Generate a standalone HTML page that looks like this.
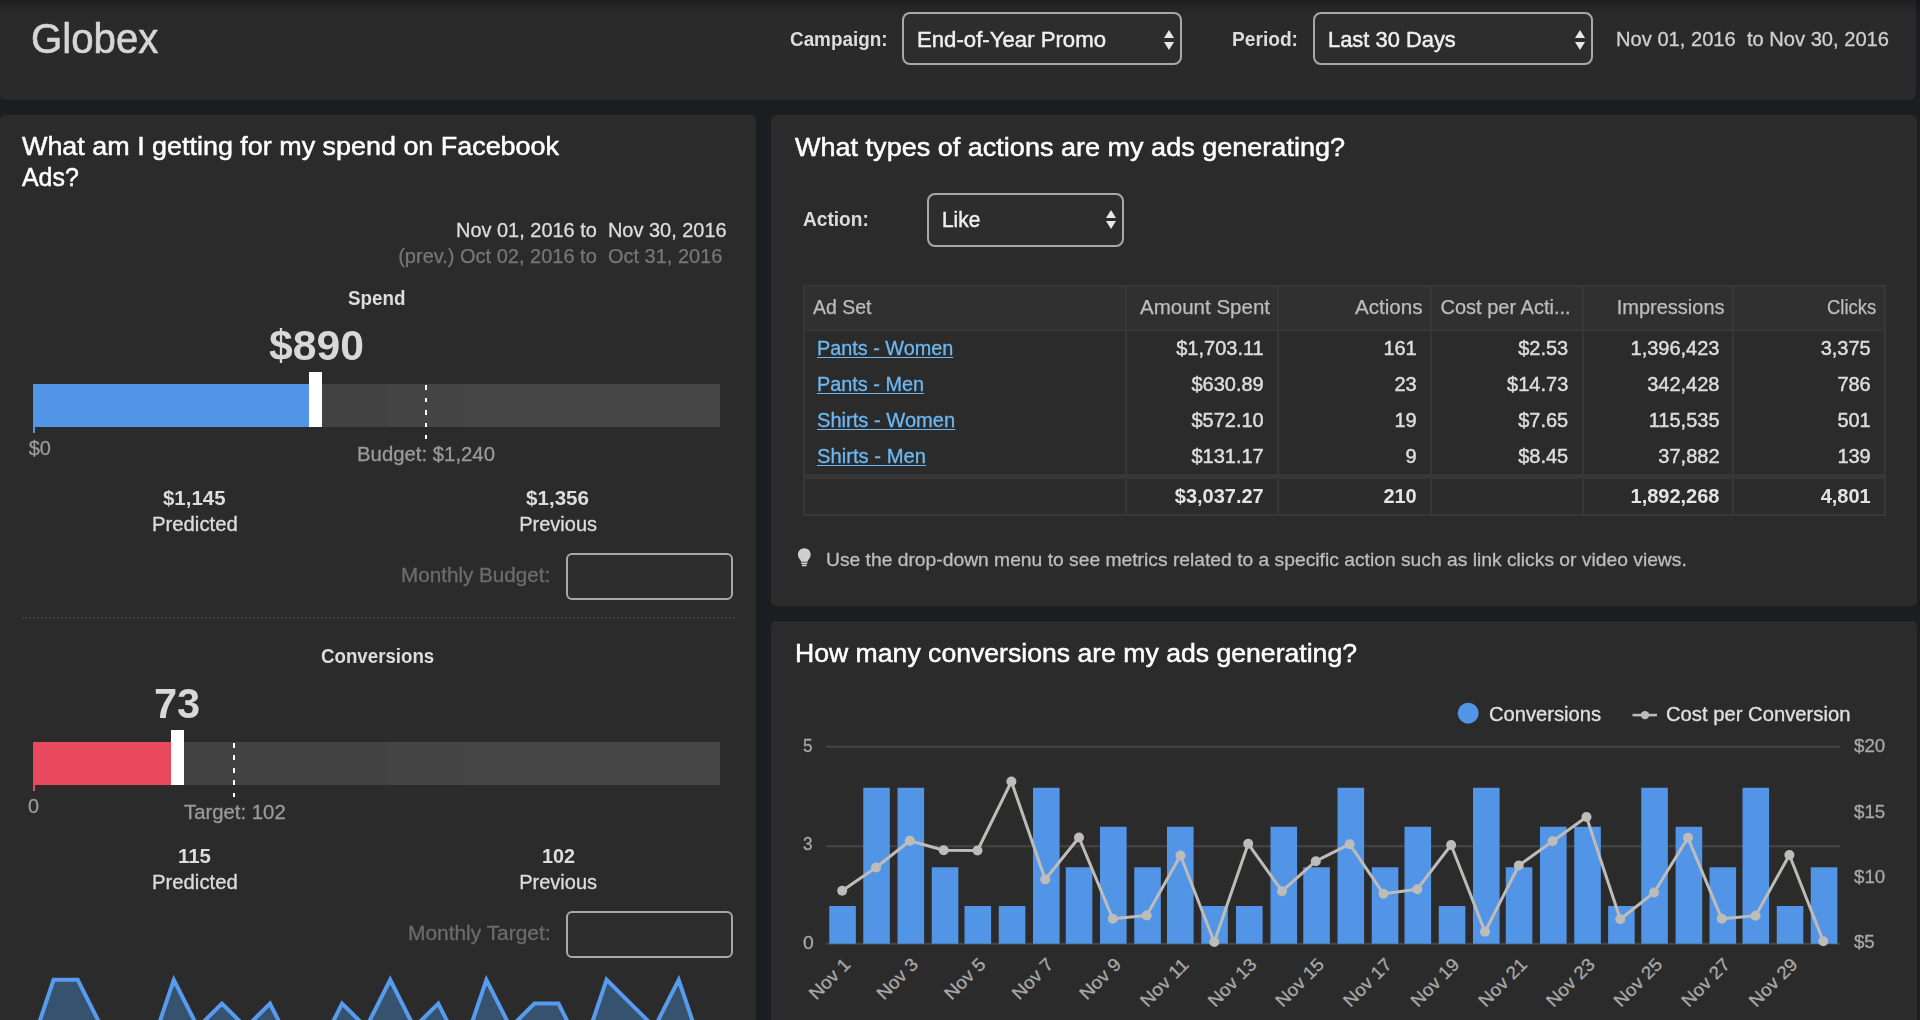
<!DOCTYPE html>
<html lang="en">
<head>
<meta charset="utf-8">
<title>Globex - Facebook Ads Dashboard</title>
<style>
html,body{margin:0;padding:0;overflow:hidden;}
body{width:1920px;height:1020px;overflow:hidden;background:#1c1d21;font-family:"Liberation Sans",sans-serif;position:relative;}
.abs,.t{position:absolute;}
.t{white-space:nowrap;transform-origin:0 0;}
.panel{position:absolute;background:#2b2b2b;border-radius:5px;}
.sel{position:absolute;box-sizing:border-box;border:2px solid #a8a8a8;border-radius:8px;background:#2d2d2d;}
.inp{position:absolute;box-sizing:border-box;border:2px solid #a8a8a8;border-radius:6px;background:#2d2d2d;}
.arr{position:absolute;width:0;height:0;border-left:5.4px solid transparent;border-right:5.4px solid transparent;}
.arr.up{border-bottom:8px solid #e8e8e8;}
.arr.dn{border-top:8px solid #e8e8e8;}
.vl,.hl{position:absolute;background:#373737;}
a.t{color:#6db8f2;text-decoration:none;}
</style>
</head>
<body>
<div id="clip" style="position:relative;width:1920px;height:1020px;overflow:hidden;">
<div id="stage" style="position:absolute;left:-20px;top:-20px;width:1960px;height:1060px;background:#1c1d21;filter:blur(0.55px);">
<div id="inner" style="position:absolute;left:20px;top:20px;width:1920px;height:1020px;">
<!-- header -->
<div class="abs" id="hdr" style="left:0;top:0;width:1916px;height:100px;background:#2a2a2a;border-radius:0 0 7px 5px;"></div>
<div class="abs" style="left:0;top:0;width:1920px;height:20px;background:linear-gradient(to bottom,rgba(0,0,0,.30) 0,rgba(0,0,0,.13) 7px,rgba(0,0,0,.04) 14px,rgba(0,0,0,0) 20px);"></div>
<div class="sel" style="left:902px;top:12px;width:280px;height:53px;"></div>
<div class="arr up" style="left:1163.5px;top:29.5px;"></div><div class="arr dn" style="left:1163.5px;top:41.5px;"></div>
<div class="sel" style="left:1313px;top:12px;width:280px;height:53px;"></div>
<div class="arr up" style="left:1574.5px;top:29.5px;"></div><div class="arr dn" style="left:1574.5px;top:41.5px;"></div>

<!-- panels -->
<div class="panel" style="left:0px;top:114.5px;width:756px;height:920px;"></div>
<div class="panel" style="left:771px;top:114.5px;width:1145.5px;height:491px;"></div>
<div class="panel" style="left:771px;top:621px;width:1145.5px;height:420px;"></div>

<!-- LEFT PANEL GRAPHICS -->
<div class="abs" style="left:32.5px;top:384.2px;width:687.5px;height:42.8px;background:#464646;"></div>
<div class="abs" style="left:32.5px;top:384.2px;width:355.5px;height:42.8px;background:#424242;"></div>
<div class="abs" style="left:388px;top:384.2px;width:76px;height:42.8px;background:#444444;"></div>
<div class="abs" style="left:32.5px;top:384.2px;width:277.0px;height:42.8px;background:#5294e6;"></div>
<div class="abs" style="left:32.5px;top:384.2px;width:2.5px;height:48.8px;background:#5294e6;"></div>
<div class="abs" style="left:309.25px;top:372.09999999999997px;width:12.75px;height:54.9px;background:#ffffff;"></div>
<div class="abs" style="left:425.25px;top:385.0px;width:2px;height:54.3px;background:repeating-linear-gradient(#ffffff 0,#ffffff 4.5px,transparent 4.5px,transparent 12.5px);"></div>
<div class="abs" style="left:32.5px;top:742.2px;width:687.5px;height:42.8px;background:#464646;"></div>
<div class="abs" style="left:32.5px;top:742.2px;width:355.5px;height:42.8px;background:#424242;"></div>
<div class="abs" style="left:388px;top:742.2px;width:76px;height:42.8px;background:#444444;"></div>
<div class="abs" style="left:32.5px;top:742.2px;width:139.0px;height:42.8px;background:#e8495d;"></div>
<div class="abs" style="left:32.5px;top:742.2px;width:2.5px;height:48.8px;background:#e8495d;"></div>
<div class="abs" style="left:171.25px;top:730.1px;width:13.0px;height:54.9px;background:#ffffff;"></div>
<div class="abs" style="left:233.25px;top:743.0px;width:2px;height:54.3px;background:repeating-linear-gradient(#ffffff 0,#ffffff 4.5px,transparent 4.5px,transparent 12.5px);"></div>
<div class="inp" style="left:565.5px;top:553px;width:167px;height:46.5px;"></div>
<div class="inp" style="left:565.5px;top:911px;width:167px;height:46.5px;"></div>
<div class="abs" style="left:22px;top:616.5px;width:713px;height:0;border-top:2px dotted #3c3c3c;"></div>
<svg class="abs" style="left:0;top:960px;" width="756" height="60" viewBox="0 960 756 60"><path d="M29.6,1051.2 L53.6,979.8 L77.7,979.8 L101.7,1027.4 L125.8,1051.2 L149.8,1051.2 L173.8,979.8 L197.9,1027.4 L221.9,1003.6 L246.0,1027.4 L270.0,1003.6 L294.0,1051.2 L318.1,1051.2 L342.1,1003.6 L366.2,1027.4 L390.2,979.8 L414.2,1027.4 L438.3,1003.6 L462.3,1051.2 L486.4,979.8 L510.4,1027.4 L534.4,1003.6 L558.5,1003.6 L582.5,1051.2 L606.6,979.8 L630.6,1003.6 L654.6,1027.4 L678.7,979.8 L702.7,1051.2 L726.8,1027.4 L726.8,1100 L29.6,1100 Z" fill="#37526f"/><path d="M29.6,1051.2 L53.6,979.8 L77.7,979.8 L101.7,1027.4 L125.8,1051.2 L149.8,1051.2 L173.8,979.8 L197.9,1027.4 L221.9,1003.6 L246.0,1027.4 L270.0,1003.6 L294.0,1051.2 L318.1,1051.2 L342.1,1003.6 L366.2,1027.4 L390.2,979.8 L414.2,1027.4 L438.3,1003.6 L462.3,1051.2 L486.4,979.8 L510.4,1027.4 L534.4,1003.6 L558.5,1003.6 L582.5,1051.2 L606.6,979.8 L630.6,1003.6 L654.6,1027.4 L678.7,979.8 L702.7,1051.2 L726.8,1027.4" fill="none" stroke="#579bee" stroke-width="4" stroke-linejoin="miter"/></svg>

<!-- RIGHT PANEL 1 -->
<div class="sel" style="left:927px;top:192.75px;width:197px;height:53.75px;background:#2d2d2d;"></div>
<div class="arr up" style="left:1105.6px;top:209.6px;"></div><div class="arr dn" style="left:1105.6px;top:221.4px;"></div>
<div class="abs" style="left:803px;top:285.5px;width:1083px;height:44px;background:#303030;"></div>
<div class="hl" style="left:803px;top:285px;width:1083px;height:2px;"></div>
<div class="hl" style="left:803px;top:328.5px;width:1083px;height:2px;"></div>
<div class="hl" style="left:803px;top:474px;width:1083px;height:4.5px;"></div>
<div class="hl" style="left:803px;top:513.5px;width:1083px;height:2px;"></div>
<div class="vl" style="left:803px;top:285px;width:2px;height:230.5px;"></div>
<div class="vl" style="left:1124.75px;top:285px;width:2px;height:230.5px;"></div>
<div class="vl" style="left:1277.25px;top:285px;width:2px;height:230.5px;"></div>
<div class="vl" style="left:1430.25px;top:285px;width:2px;height:230.5px;"></div>
<div class="vl" style="left:1581.5px;top:285px;width:2px;height:230.5px;"></div>
<div class="vl" style="left:1732.25px;top:285px;width:2px;height:230.5px;"></div>
<div class="vl" style="left:1884.25px;top:285px;width:2px;height:230.5px;"></div>
<svg class="abs" style="left:796.5px;top:548px;" width="14.6" height="19.5" viewBox="0 0 16 20" preserveAspectRatio="none"><path d="M8 0.3C4.1 0.3 1 3.2 1 6.8c0 2.3 1.3 3.7 2.3 5 .6.8 1 1.5 1 2.2h7.4c0-.7.4-1.4 1-2.2 1-1.3 2.3-2.7 2.3-5C15 3.2 11.9.3 8 .3z" fill="#cfcfcf"/><rect x="4.6" y="14.8" width="6.8" height="1.6" rx=".6" fill="#cfcfcf"/><rect x="5.2" y="17" width="5.6" height="1.8" rx=".9" fill="#cfcfcf"/></svg>

<!-- RIGHT PANEL 2: chart -->
<svg class="abs" style="left:771px;top:621px;" width="1146" height="399" viewBox="771 621 1146 399">
<rect x="826" y="745.75" width="1014" height="2" fill="#464646"/>
<rect x="826" y="845.25" width="1014" height="2" fill="#464646"/>
<rect x="826" y="942.75" width="1014" height="2" fill="#464646"/>
<rect x="829.25" y="906.00" width="26.6" height="37.75" fill="#5294e6"/>
<rect x="863.25" y="787.75" width="26.6" height="156.00" fill="#5294e6"/>
<rect x="897.50" y="787.75" width="26.6" height="156.00" fill="#5294e6"/>
<rect x="931.75" y="867.25" width="26.6" height="76.50" fill="#5294e6"/>
<rect x="964.50" y="906.00" width="26.6" height="37.75" fill="#5294e6"/>
<rect x="998.75" y="906.00" width="26.6" height="37.75" fill="#5294e6"/>
<rect x="1033.00" y="787.75" width="26.6" height="156.00" fill="#5294e6"/>
<rect x="1065.75" y="867.25" width="26.6" height="76.50" fill="#5294e6"/>
<rect x="1100.00" y="826.75" width="26.6" height="117.00" fill="#5294e6"/>
<rect x="1134.25" y="867.25" width="26.6" height="76.50" fill="#5294e6"/>
<rect x="1167.00" y="826.75" width="26.6" height="117.00" fill="#5294e6"/>
<rect x="1201.25" y="906.00" width="26.6" height="37.75" fill="#5294e6"/>
<rect x="1236.00" y="906.00" width="26.6" height="37.75" fill="#5294e6"/>
<rect x="1270.50" y="826.75" width="26.6" height="117.00" fill="#5294e6"/>
<rect x="1303.25" y="867.25" width="26.6" height="76.50" fill="#5294e6"/>
<rect x="1337.50" y="787.75" width="26.6" height="156.00" fill="#5294e6"/>
<rect x="1371.75" y="867.25" width="26.6" height="76.50" fill="#5294e6"/>
<rect x="1404.50" y="826.75" width="26.6" height="117.00" fill="#5294e6"/>
<rect x="1438.75" y="906.00" width="26.6" height="37.75" fill="#5294e6"/>
<rect x="1473.00" y="787.75" width="26.6" height="156.00" fill="#5294e6"/>
<rect x="1505.75" y="867.25" width="26.6" height="76.50" fill="#5294e6"/>
<rect x="1540.00" y="826.75" width="26.6" height="117.00" fill="#5294e6"/>
<rect x="1574.25" y="826.75" width="26.6" height="117.00" fill="#5294e6"/>
<rect x="1608.10" y="906.00" width="26.6" height="37.75" fill="#5294e6"/>
<rect x="1641.25" y="787.75" width="26.6" height="156.00" fill="#5294e6"/>
<rect x="1675.60" y="826.75" width="26.6" height="117.00" fill="#5294e6"/>
<rect x="1709.50" y="867.25" width="26.6" height="76.50" fill="#5294e6"/>
<rect x="1742.50" y="787.75" width="26.6" height="156.00" fill="#5294e6"/>
<rect x="1776.75" y="906.00" width="26.6" height="37.75" fill="#5294e6"/>
<rect x="1810.75" y="867.25" width="26.6" height="76.50" fill="#5294e6"/>
<path d="M842.2,890.8 L876.0,867.5 L909.9,840.8 L943.7,850.2 L977.5,850.5 L1011.4,781.5 L1045.2,879.5 L1079.0,837.5 L1112.8,918.8 L1146.7,915.5 L1180.5,855.5 L1214.3,942.0 L1248.2,843.8 L1282.0,891.2 L1315.8,861.2 L1349.7,844.2 L1383.5,893.8 L1417.3,889.2 L1451.1,845.0 L1485.0,931.8 L1518.8,865.5 L1552.6,841.2 L1586.5,817.0 L1620.3,919.2 L1654.1,892.5 L1688.0,837.8 L1721.8,918.8 L1755.6,915.8 L1789.4,855.0 L1823.3,941.2" fill="none" stroke="#bebcb8" stroke-width="3" stroke-linejoin="round"/>
<circle cx="842.2" cy="890.8" r="5" fill="#bebcb8"/>
<circle cx="876.0" cy="867.5" r="5" fill="#bebcb8"/>
<circle cx="909.9" cy="840.8" r="5" fill="#bebcb8"/>
<circle cx="943.7" cy="850.2" r="5" fill="#bebcb8"/>
<circle cx="977.5" cy="850.5" r="5" fill="#bebcb8"/>
<circle cx="1011.4" cy="781.5" r="5" fill="#bebcb8"/>
<circle cx="1045.2" cy="879.5" r="5" fill="#bebcb8"/>
<circle cx="1079.0" cy="837.5" r="5" fill="#bebcb8"/>
<circle cx="1112.8" cy="918.8" r="5" fill="#bebcb8"/>
<circle cx="1146.7" cy="915.5" r="5" fill="#bebcb8"/>
<circle cx="1180.5" cy="855.5" r="5" fill="#bebcb8"/>
<circle cx="1214.3" cy="942.0" r="5" fill="#bebcb8"/>
<circle cx="1248.2" cy="843.8" r="5" fill="#bebcb8"/>
<circle cx="1282.0" cy="891.2" r="5" fill="#bebcb8"/>
<circle cx="1315.8" cy="861.2" r="5" fill="#bebcb8"/>
<circle cx="1349.7" cy="844.2" r="5" fill="#bebcb8"/>
<circle cx="1383.5" cy="893.8" r="5" fill="#bebcb8"/>
<circle cx="1417.3" cy="889.2" r="5" fill="#bebcb8"/>
<circle cx="1451.1" cy="845.0" r="5" fill="#bebcb8"/>
<circle cx="1485.0" cy="931.8" r="5" fill="#bebcb8"/>
<circle cx="1518.8" cy="865.5" r="5" fill="#bebcb8"/>
<circle cx="1552.6" cy="841.2" r="5" fill="#bebcb8"/>
<circle cx="1586.5" cy="817.0" r="5" fill="#bebcb8"/>
<circle cx="1620.3" cy="919.2" r="5" fill="#bebcb8"/>
<circle cx="1654.1" cy="892.5" r="5" fill="#bebcb8"/>
<circle cx="1688.0" cy="837.8" r="5" fill="#bebcb8"/>
<circle cx="1721.8" cy="918.8" r="5" fill="#bebcb8"/>
<circle cx="1755.6" cy="915.8" r="5" fill="#bebcb8"/>
<circle cx="1789.4" cy="855.0" r="5" fill="#bebcb8"/>
<circle cx="1823.3" cy="941.2" r="5" fill="#bebcb8"/>
<circle cx="1468.2" cy="713.2" r="10.5" fill="#5294e6"/>
<rect x="1632.5" y="713.8" width="24.5" height="2.6" fill="#bebcb8"/><circle cx="1645" cy="715.1" r="4.2" fill="#bebcb8"/>
<text x="851.6" y="965.5" text-anchor="end" transform="rotate(-45 851.6 965.5)" font-size="18" fill="#a8a8a8" stroke="#a8a8a8" stroke-width="0.3" font-family="Liberation Sans, sans-serif" textLength="50" lengthAdjust="spacingAndGlyphs">Nov 1</text>
<text x="919.3" y="965.5" text-anchor="end" transform="rotate(-45 919.3 965.5)" font-size="18" fill="#a8a8a8" stroke="#a8a8a8" stroke-width="0.3" font-family="Liberation Sans, sans-serif" textLength="50" lengthAdjust="spacingAndGlyphs">Nov 3</text>
<text x="986.9" y="965.5" text-anchor="end" transform="rotate(-45 986.9 965.5)" font-size="18" fill="#a8a8a8" stroke="#a8a8a8" stroke-width="0.3" font-family="Liberation Sans, sans-serif" textLength="50" lengthAdjust="spacingAndGlyphs">Nov 5</text>
<text x="1054.6" y="965.5" text-anchor="end" transform="rotate(-45 1054.6 965.5)" font-size="18" fill="#a8a8a8" stroke="#a8a8a8" stroke-width="0.3" font-family="Liberation Sans, sans-serif" textLength="50" lengthAdjust="spacingAndGlyphs">Nov 7</text>
<text x="1122.2" y="965.5" text-anchor="end" transform="rotate(-45 1122.2 965.5)" font-size="18" fill="#a8a8a8" stroke="#a8a8a8" stroke-width="0.3" font-family="Liberation Sans, sans-serif" textLength="50" lengthAdjust="spacingAndGlyphs">Nov 9</text>
<text x="1189.9" y="965.5" text-anchor="end" transform="rotate(-45 1189.9 965.5)" font-size="18" fill="#a8a8a8" stroke="#a8a8a8" stroke-width="0.3" font-family="Liberation Sans, sans-serif" textLength="60" lengthAdjust="spacingAndGlyphs">Nov 11</text>
<text x="1257.6" y="965.5" text-anchor="end" transform="rotate(-45 1257.6 965.5)" font-size="18" fill="#a8a8a8" stroke="#a8a8a8" stroke-width="0.3" font-family="Liberation Sans, sans-serif" textLength="60" lengthAdjust="spacingAndGlyphs">Nov 13</text>
<text x="1325.2" y="965.5" text-anchor="end" transform="rotate(-45 1325.2 965.5)" font-size="18" fill="#a8a8a8" stroke="#a8a8a8" stroke-width="0.3" font-family="Liberation Sans, sans-serif" textLength="60" lengthAdjust="spacingAndGlyphs">Nov 15</text>
<text x="1392.9" y="965.5" text-anchor="end" transform="rotate(-45 1392.9 965.5)" font-size="18" fill="#a8a8a8" stroke="#a8a8a8" stroke-width="0.3" font-family="Liberation Sans, sans-serif" textLength="60" lengthAdjust="spacingAndGlyphs">Nov 17</text>
<text x="1460.5" y="965.5" text-anchor="end" transform="rotate(-45 1460.5 965.5)" font-size="18" fill="#a8a8a8" stroke="#a8a8a8" stroke-width="0.3" font-family="Liberation Sans, sans-serif" textLength="60" lengthAdjust="spacingAndGlyphs">Nov 19</text>
<text x="1528.2" y="965.5" text-anchor="end" transform="rotate(-45 1528.2 965.5)" font-size="18" fill="#a8a8a8" stroke="#a8a8a8" stroke-width="0.3" font-family="Liberation Sans, sans-serif" textLength="60" lengthAdjust="spacingAndGlyphs">Nov 21</text>
<text x="1595.9" y="965.5" text-anchor="end" transform="rotate(-45 1595.9 965.5)" font-size="18" fill="#a8a8a8" stroke="#a8a8a8" stroke-width="0.3" font-family="Liberation Sans, sans-serif" textLength="60" lengthAdjust="spacingAndGlyphs">Nov 23</text>
<text x="1663.5" y="965.5" text-anchor="end" transform="rotate(-45 1663.5 965.5)" font-size="18" fill="#a8a8a8" stroke="#a8a8a8" stroke-width="0.3" font-family="Liberation Sans, sans-serif" textLength="60" lengthAdjust="spacingAndGlyphs">Nov 25</text>
<text x="1731.2" y="965.5" text-anchor="end" transform="rotate(-45 1731.2 965.5)" font-size="18" fill="#a8a8a8" stroke="#a8a8a8" stroke-width="0.3" font-family="Liberation Sans, sans-serif" textLength="60" lengthAdjust="spacingAndGlyphs">Nov 27</text>
<text x="1798.8" y="965.5" text-anchor="end" transform="rotate(-45 1798.8 965.5)" font-size="18" fill="#a8a8a8" stroke="#a8a8a8" stroke-width="0.3" font-family="Liberation Sans, sans-serif" textLength="60" lengthAdjust="spacingAndGlyphs">Nov 29</text>
</svg>

<div id="txt" style="position:absolute;left:0;top:0;width:1920px;height:1020px;will-change:transform;">
<div class="t" style="top:17.30px;font-size:43px;line-height:43px;color:#d6d6d6;-webkit-text-stroke:0.6px #d6d6d6;left:31.40px;transform:scaleX(0.9350);">Globex</div>
<div class="t" style="top:28.02px;font-size:21px;line-height:21px;color:#dcdcdc;font-weight:700;left:790.00px;transform:scaleX(0.8985);">Campaign:</div>
<div class="t" style="top:29.15px;font-size:22.5px;line-height:22.5px;color:#f0f0f0;-webkit-text-stroke:0.45px #f0f0f0;left:917.00px;transform:scaleX(0.9855);">End-of-Year Promo</div>
<div class="t" style="top:28.02px;font-size:21px;line-height:21px;color:#dcdcdc;font-weight:700;left:1232.00px;transform:scaleX(0.9123);">Period:</div>
<div class="t" style="top:29.15px;font-size:22.5px;line-height:22.5px;color:#f0f0f0;-webkit-text-stroke:0.45px #f0f0f0;left:1328.20px;transform:scaleX(0.9731);">Last 30 Days</div>
<div class="t" style="top:29.07px;font-size:20px;line-height:20px;color:#d0d0d0;-webkit-text-stroke:0.3px #d0d0d0;left:1616.00px;transform:scaleX(1.0062);">Nov 01, 2016&nbsp; to Nov 30, 2016</div>
<div class="t" style="top:132.99px;font-size:26px;line-height:26px;color:#ffffff;-webkit-text-stroke:0.5px #ffffff;left:22.00px;transform:scaleX(1.0350);">What am I getting for my spend on Facebook</div>
<div class="t" style="top:163.99px;font-size:26px;line-height:26px;color:#ffffff;-webkit-text-stroke:0.5px #ffffff;left:22.00px;transform:scaleX(0.9576);">Ads?</div>
<div class="t" style="top:219.67px;font-size:20px;line-height:20px;color:#dddddd;-webkit-text-stroke:0.3px #dddddd;left:456.20px;transform:scaleX(0.9974);">Nov 01, 2016 to&nbsp; Nov 30, 2016</div>
<div class="t" style="top:246.07px;font-size:20px;line-height:20px;color:#777777;-webkit-text-stroke:0.25px #777777;left:398.20px;">(prev.) Oct 02, 2016 to&nbsp; Oct 31, 2016</div>
<div class="t" style="top:288.47px;font-size:20px;line-height:20px;color:#dddddd;font-weight:700;left:348.00px;transform:scaleX(0.9407);">Spend</div>
<div class="t" style="top:324.95px;font-size:42px;line-height:42px;color:#d8d8d8;font-weight:700;left:268.75px;transform:scaleX(1.0167);">$890</div>
<div class="t" style="top:438.07px;font-size:20px;line-height:20px;color:#9a9a9a;-webkit-text-stroke:0.3px #9a9a9a;left:28.75px;">$0</div>
<div class="t" style="top:444.07px;font-size:20px;line-height:20px;color:#9a9a9a;-webkit-text-stroke:0.3px #9a9a9a;left:357.00px;transform:scaleX(1.0170);">Budget: $1,240</div>
<div class="t" style="top:488.07px;font-size:20px;line-height:20px;color:#dddddd;font-weight:700;left:163.00px;transform:scaleX(1.0217);">$1,145</div>
<div class="t" style="top:514.37px;font-size:20px;line-height:20px;color:#dddddd;-webkit-text-stroke:0.3px #dddddd;left:151.75px;transform:scaleX(1.0148);">Predicted</div>
<div class="t" style="top:488.07px;font-size:20px;line-height:20px;color:#dddddd;font-weight:700;left:526.25px;transform:scaleX(1.0299);">$1,356</div>
<div class="t" style="top:514.37px;font-size:20px;line-height:20px;color:#dddddd;-webkit-text-stroke:0.3px #dddddd;left:519.25px;">Previous</div>
<div class="t" style="top:564.57px;font-size:20px;line-height:20px;color:#6c6c6c;-webkit-text-stroke:0.3px #6c6c6c;left:400.75px;transform:scaleX(1.0326);">Monthly Budget:</div>
<div class="t" style="top:646.47px;font-size:20px;line-height:20px;color:#dddddd;font-weight:700;left:320.50px;transform:scaleX(0.9347);">Conversions</div>
<div class="t" style="top:682.95px;font-size:42px;line-height:42px;color:#d8d8d8;font-weight:700;left:153.75px;transform:scaleX(0.9900);">73</div>
<div class="t" style="top:796.07px;font-size:20px;line-height:20px;color:#9a9a9a;-webkit-text-stroke:0.3px #9a9a9a;left:28.25px;transform:scaleX(0.9888);">0</div>
<div class="t" style="top:802.07px;font-size:20px;line-height:20px;color:#9a9a9a;-webkit-text-stroke:0.3px #9a9a9a;left:183.75px;transform:scaleX(1.0167);">Target: 102</div>
<div class="t" style="top:846.07px;font-size:20px;line-height:20px;color:#dddddd;font-weight:700;left:178.25px;transform:scaleX(1.0228);">115</div>
<div class="t" style="top:872.37px;font-size:20px;line-height:20px;color:#dddddd;-webkit-text-stroke:0.3px #dddddd;left:151.75px;transform:scaleX(1.0148);">Predicted</div>
<div class="t" style="top:846.07px;font-size:20px;line-height:20px;color:#dddddd;font-weight:700;left:541.50px;transform:scaleX(0.9888);">102</div>
<div class="t" style="top:872.37px;font-size:20px;line-height:20px;color:#dddddd;-webkit-text-stroke:0.3px #dddddd;left:519.25px;">Previous</div>
<div class="t" style="top:922.57px;font-size:20px;line-height:20px;color:#6c6c6c;-webkit-text-stroke:0.3px #6c6c6c;left:407.70px;transform:scaleX(1.0456);">Monthly Target:</div>
<div class="t" style="top:133.59px;font-size:26px;line-height:26px;color:#ffffff;-webkit-text-stroke:0.5px #ffffff;left:795.00px;transform:scaleX(1.0398);">What types of actions are my ads generating?</div>
<div class="t" style="top:207.82px;font-size:21px;line-height:21px;color:#dcdcdc;font-weight:700;left:803.00px;transform:scaleX(0.9091);">Action:</div>
<div class="t" style="top:209.35px;font-size:22.5px;line-height:22.5px;color:#f0f0f0;-webkit-text-stroke:0.45px #f0f0f0;left:942.00px;transform:scaleX(0.9278);">Like</div>
<div class="t" style="top:296.82px;font-size:20px;line-height:20px;color:#bdbdbd;-webkit-text-stroke:0.25px #bdbdbd;left:812.50px;transform:scaleX(0.9742);">Ad Set</div>
<div class="t" style="top:296.82px;font-size:20px;line-height:20px;color:#bdbdbd;-webkit-text-stroke:0.25px #bdbdbd;left:1140.00px;transform:scaleX(1.0256);">Amount Spent</div>
<div class="t" style="top:296.82px;font-size:20px;line-height:20px;color:#bdbdbd;-webkit-text-stroke:0.25px #bdbdbd;left:1355.00px;transform:scaleX(1.0291);">Actions</div>
<div class="t" style="top:296.82px;font-size:20px;line-height:20px;color:#bdbdbd;-webkit-text-stroke:0.25px #bdbdbd;left:1440.50px;">Cost per Acti...</div>
<div class="t" style="top:296.82px;font-size:20px;line-height:20px;color:#bdbdbd;-webkit-text-stroke:0.25px #bdbdbd;left:1616.75px;">Impressions</div>
<div class="t" style="top:296.82px;font-size:20px;line-height:20px;color:#bdbdbd;-webkit-text-stroke:0.25px #bdbdbd;left:1827.00px;transform:scaleX(0.9233);">Clicks</div>
<a class="t" style="top:338.07px;font-size:20px;line-height:20px;color:#6db8f2;-webkit-text-stroke:0.3px #6db8f2;left:816.75px;transform:scaleX(0.9911);text-decoration:underline;text-decoration-thickness:1.3px;text-underline-offset:2px;">Pants - Women</a>
<div class="t" style="top:338.07px;font-size:20px;line-height:20px;color:#dddddd;-webkit-text-stroke:0.45px #dddddd;left:1176.25px;">$1,703.11</div>
<div class="t" style="top:338.07px;font-size:20px;line-height:20px;color:#dddddd;-webkit-text-stroke:0.45px #dddddd;left:1383.38px;">161</div>
<div class="t" style="top:338.07px;font-size:20px;line-height:20px;color:#dddddd;-webkit-text-stroke:0.45px #dddddd;left:1518.19px;">$2.53</div>
<div class="t" style="top:338.07px;font-size:20px;line-height:20px;color:#dddddd;-webkit-text-stroke:0.45px #dddddd;left:1630.52px;">1,396,423</div>
<div class="t" style="top:338.07px;font-size:20px;line-height:20px;color:#dddddd;-webkit-text-stroke:0.45px #dddddd;left:1820.69px;">3,375</div>
<a class="t" style="top:373.82px;font-size:20px;line-height:20px;color:#6db8f2;-webkit-text-stroke:0.3px #6db8f2;left:816.75px;transform:scaleX(0.9923);text-decoration:underline;text-decoration-thickness:1.3px;text-underline-offset:2px;">Pants - Men</a>
<div class="t" style="top:373.82px;font-size:20px;line-height:20px;color:#dddddd;-webkit-text-stroke:0.45px #dddddd;left:1191.45px;">$630.89</div>
<div class="t" style="top:373.82px;font-size:20px;line-height:20px;color:#dddddd;-webkit-text-stroke:0.45px #dddddd;left:1394.50px;">23</div>
<div class="t" style="top:373.82px;font-size:20px;line-height:20px;color:#dddddd;-webkit-text-stroke:0.45px #dddddd;left:1507.08px;">$14.73</div>
<div class="t" style="top:373.82px;font-size:20px;line-height:20px;color:#dddddd;-webkit-text-stroke:0.45px #dddddd;left:1647.20px;">342,428</div>
<div class="t" style="top:373.82px;font-size:20px;line-height:20px;color:#dddddd;-webkit-text-stroke:0.45px #dddddd;left:1837.38px;">786</div>
<a class="t" style="top:409.82px;font-size:20px;line-height:20px;color:#6db8f2;-webkit-text-stroke:0.3px #6db8f2;left:816.75px;transform:scaleX(1.0058);text-decoration:underline;text-decoration-thickness:1.3px;text-underline-offset:2px;">Shirts - Women</a>
<div class="t" style="top:409.82px;font-size:20px;line-height:20px;color:#dddddd;-webkit-text-stroke:0.45px #dddddd;left:1191.45px;">$572.10</div>
<div class="t" style="top:409.82px;font-size:20px;line-height:20px;color:#dddddd;-webkit-text-stroke:0.45px #dddddd;left:1394.50px;">19</div>
<div class="t" style="top:409.82px;font-size:20px;line-height:20px;color:#dddddd;-webkit-text-stroke:0.45px #dddddd;left:1518.19px;">$7.65</div>
<div class="t" style="top:409.82px;font-size:20px;line-height:20px;color:#dddddd;-webkit-text-stroke:0.45px #dddddd;left:1648.69px;">115,535</div>
<div class="t" style="top:409.82px;font-size:20px;line-height:20px;color:#dddddd;-webkit-text-stroke:0.45px #dddddd;left:1837.38px;">501</div>
<a class="t" style="top:445.87px;font-size:20px;line-height:20px;color:#6db8f2;-webkit-text-stroke:0.3px #6db8f2;left:816.75px;transform:scaleX(1.0110);text-decoration:underline;text-decoration-thickness:1.3px;text-underline-offset:2px;">Shirts - Men</a>
<div class="t" style="top:445.87px;font-size:20px;line-height:20px;color:#dddddd;-webkit-text-stroke:0.45px #dddddd;left:1191.45px;">$131.17</div>
<div class="t" style="top:445.87px;font-size:20px;line-height:20px;color:#dddddd;-webkit-text-stroke:0.45px #dddddd;left:1405.62px;">9</div>
<div class="t" style="top:445.87px;font-size:20px;line-height:20px;color:#dddddd;-webkit-text-stroke:0.45px #dddddd;left:1518.19px;">$8.45</div>
<div class="t" style="top:445.87px;font-size:20px;line-height:20px;color:#dddddd;-webkit-text-stroke:0.45px #dddddd;left:1658.33px;">37,882</div>
<div class="t" style="top:445.87px;font-size:20px;line-height:20px;color:#dddddd;-webkit-text-stroke:0.45px #dddddd;left:1837.38px;">139</div>
<div class="t" style="top:485.87px;font-size:20px;line-height:20px;color:#e4e4e4;font-weight:700;left:1174.77px;">$3,037.27</div>
<div class="t" style="top:485.87px;font-size:20px;line-height:20px;color:#e4e4e4;font-weight:700;left:1383.38px;">210</div>
<div class="t" style="top:485.87px;font-size:20px;line-height:20px;color:#e4e4e4;font-weight:700;left:1630.52px;">1,892,268</div>
<div class="t" style="top:485.87px;font-size:20px;line-height:20px;color:#e4e4e4;font-weight:700;left:1820.69px;">4,801</div>
<div class="t" style="top:549.67px;font-size:19px;line-height:19px;color:#bdbdbd;-webkit-text-stroke:0.3px #bdbdbd;left:826.25px;transform:scaleX(1.0138);">Use the drop-down menu to see metrics related to a specific action such as link clicks or video views.</div>
<div class="t" style="top:639.99px;font-size:26px;line-height:26px;color:#ffffff;-webkit-text-stroke:0.5px #ffffff;left:795.00px;transform:scaleX(1.0234);">How many conversions are my ads generating?</div>
<div class="t" style="top:703.82px;font-size:20px;line-height:20px;color:#e0e0e0;-webkit-text-stroke:0.3px #e0e0e0;left:1488.75px;transform:scaleX(1.0074);">Conversions</div>
<div class="t" style="top:704.32px;font-size:20px;line-height:20px;color:#e0e0e0;-webkit-text-stroke:0.3px #e0e0e0;left:1665.50px;transform:scaleX(1.0120);">Cost per Conversion</div>
<div class="t" style="top:736.76px;font-size:18px;line-height:18px;color:#a8a8a8;-webkit-text-stroke:0.3px #a8a8a8;left:803.00px;transform:scaleX(0.9485);">5</div>
<div class="t" style="top:835.26px;font-size:18px;line-height:18px;color:#a8a8a8;-webkit-text-stroke:0.3px #a8a8a8;left:803.00px;transform:scaleX(0.9485);">3</div>
<div class="t" style="top:933.76px;font-size:18px;line-height:18px;color:#a8a8a8;-webkit-text-stroke:0.3px #a8a8a8;left:802.75px;transform:scaleX(1.0733);">0</div>
<div class="t" style="top:736.76px;font-size:18px;line-height:18px;color:#a8a8a8;-webkit-text-stroke:0.3px #a8a8a8;left:1853.75px;transform:scaleX(1.0400);">$20</div>
<div class="t" style="top:803.26px;font-size:18px;line-height:18px;color:#a8a8a8;-webkit-text-stroke:0.3px #a8a8a8;left:1853.75px;transform:scaleX(1.0400);">$15</div>
<div class="t" style="top:867.76px;font-size:18px;line-height:18px;color:#a8a8a8;-webkit-text-stroke:0.3px #a8a8a8;left:1853.75px;transform:scaleX(1.0400);">$10</div>
<div class="t" style="top:932.76px;font-size:18px;line-height:18px;color:#a8a8a8;-webkit-text-stroke:0.3px #a8a8a8;left:1853.75px;transform:scaleX(1.0359);">$5</div>
</div>
</div>
</div>
</div>
</body>
</html>
